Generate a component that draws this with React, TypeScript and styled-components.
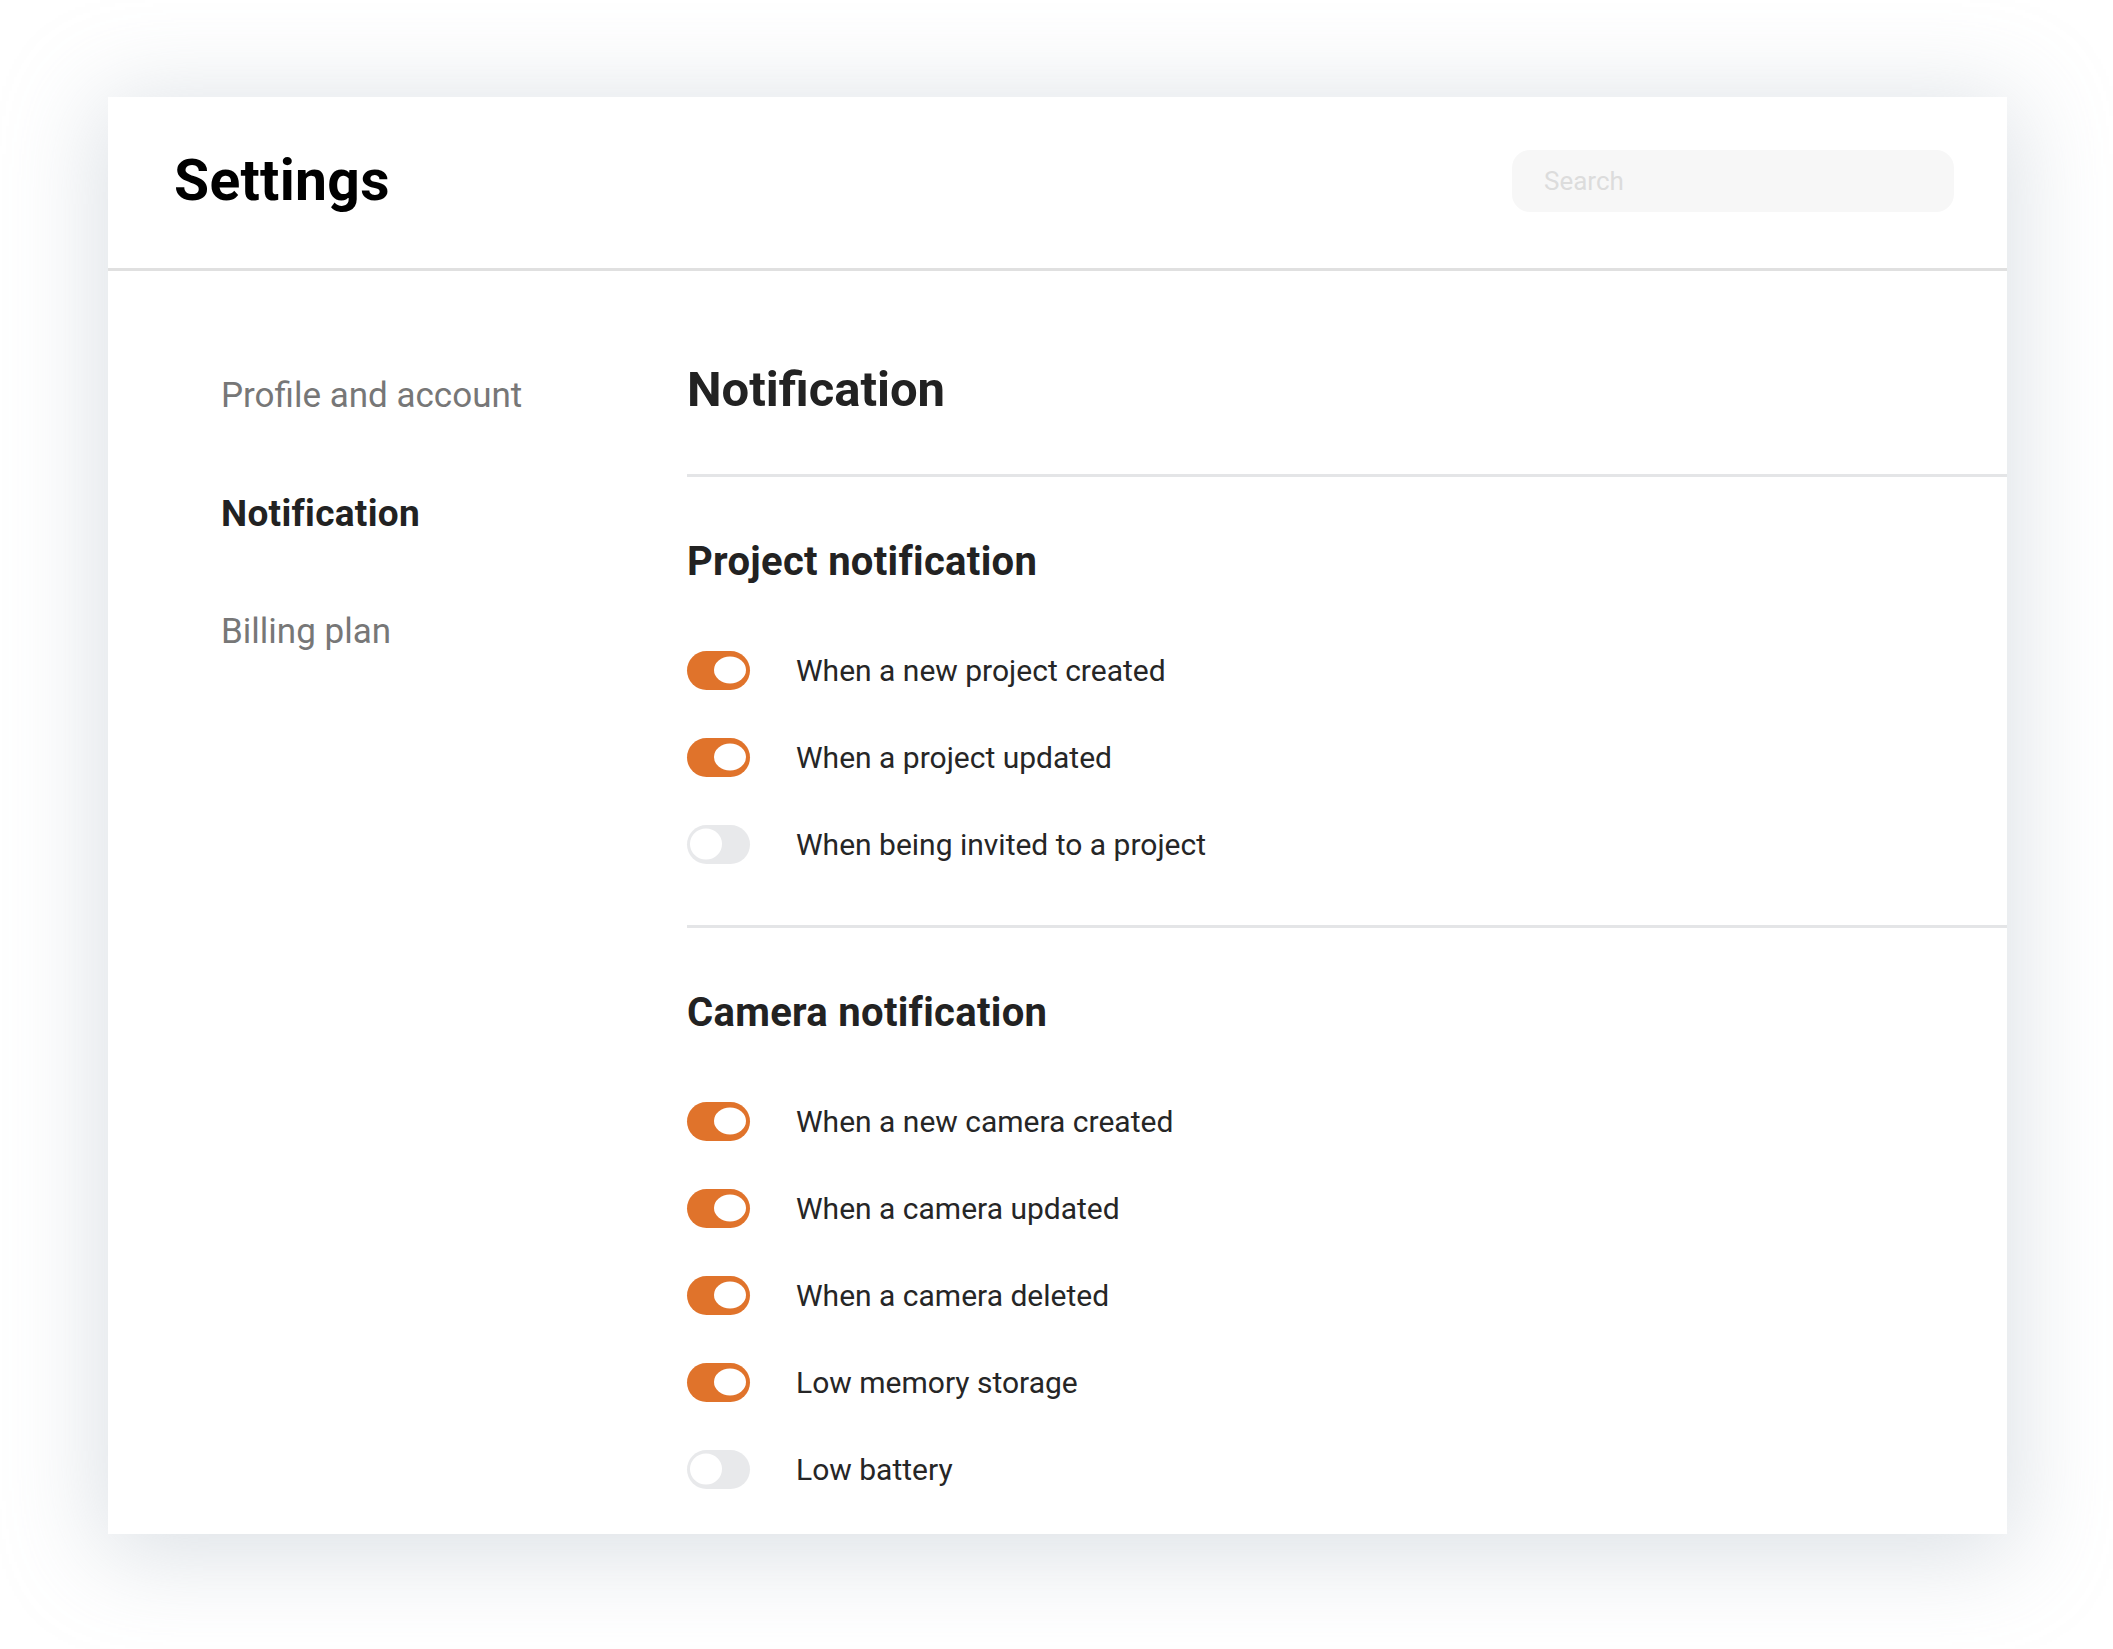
import React from "react";
import styled, { createGlobalStyle } from "styled-components";

const Global = createGlobalStyle`
  html, body { margin: 0; padding: 0; background: #ffffff; }
  body { font-family: Roboto, "Liberation Sans", Arial, sans-serif; -webkit-font-smoothing: antialiased; }
  * { box-sizing: border-box; }
`;

const Page = styled.div`
  width: 2113px;
  height: 1649px;
  padding: 97px 0 0 108px;
  overflow: hidden;
`;

const Card = styled.div`
  width: 1899px;
  background: #ffffff;
  box-shadow: 0 12px 90px 8px rgba(170, 180, 192, 0.42);
  display: flex;
  flex-direction: column;
`;

const Header = styled.header`
  height: 174px;
  border-bottom: 3px solid #e0e0e0;
  display: flex;
  align-items: center;
  justify-content: space-between;
  padding: 0 53px 4px 66px;
`;

const Title = styled.h1`
  margin: 0;
  font-size: 57px;
  font-weight: 700;
  color: #000000;
  letter-spacing: 0.3px;
`;

const Search = styled.input`
  width: 442px;
  height: 62px;
  border: none;
  outline: none;
  border-radius: 18px;
  background: #f7f7f7;
  padding: 0 0 0 32px;
  font-family: Roboto, "Liberation Sans", Arial, sans-serif;
  font-size: 26px;
  color: #333;
  &::placeholder { color: #dcdcdc; }
`;

const Body = styled.div`
  display: grid;
  grid-template-columns: 579px 1fr;
`;

const Sidebar = styled.nav`
  display: flex;
  flex-direction: column;
  gap: 76px;
  padding: 104px 0 0 113px;
`;

const NavItem = styled.div<{ $active?: boolean }>`
  font-size: ${(p) => (p.$active ? "37px" : "35px")};
  line-height: 42px;
  font-weight: ${(p) => (p.$active ? 700 : 400)};
  color: ${(p) => (p.$active ? "#222222" : "#777777")};
  letter-spacing: ${(p) => (p.$active ? "0.3px" : "0")};
`;

const Main = styled.main`
  display: flex;
  flex-direction: column;
  padding-top: 90px;
`;

const Heading = styled.h2`
  margin: 0 0 55px;
  font-size: 49px;
  line-height: 58px;
  font-weight: 700;
  color: #222222;
  letter-spacing: 0;
`;

const Section = styled.section`
  border-top: 3px solid #e4e5e7;
  padding: 62px 0 61px;
  &:last-child { padding-bottom: 45px; }
`;

const SubHeading = styled.h3`
  margin: 0 0 65px;
  font-size: 40px;
  line-height: 46px;
  font-weight: 700;
  color: #222222;
  letter-spacing: 0.3px;
`;

const Rows = styled.div`
  display: flex;
  flex-direction: column;
  gap: 47px;
`;

const Row = styled.label`
  display: flex;
  align-items: center;
  gap: 46px;
  height: 40px;
`;

const Track = styled.span<{ $on: boolean }>`
  position: relative;
  flex: none;
  width: 63px;
  height: 39px;
  border-radius: 20px;
  background: ${(p) => (p.$on ? "#e0732b" : "#e8e9eb")};
`;

const Knob = styled.span<{ $on: boolean }>`
  position: absolute;
  top: 50%;
  transform: translateY(-50%);
  ${(p) => (p.$on ? "right: 4px;" : "left: 3px;")}
  width: 32px;
  height: ${(p) => (p.$on ? "27px" : "31px")};
  border-radius: 50%;
  background: #ffffff;
`;

const Label = styled.span`
  font-size: 30px;
  color: #262626;
  letter-spacing: 0;
`;

function Toggle({ on }: { on: boolean }) {
  return (
    <Track $on={on}>
      <Knob $on={on} />
    </Track>
  );
}

const project = [
  { label: "When a new project created", on: true },
  { label: "When a project updated", on: true },
  { label: "When being invited to a project", on: false },
];

const camera = [
  { label: "When a new camera created", on: true },
  { label: "When a camera updated", on: true },
  { label: "When a camera deleted", on: true },
  { label: "Low memory storage", on: true },
  { label: "Low battery", on: false },
];

export default function App() {
  return (
    <>
      <Global />
      <Page>
        <Card>
          <Header>
            <Title>Settings</Title>
            <Search placeholder="Search" />
          </Header>
          <Body>
            <Sidebar>
              <NavItem>Profile and account</NavItem>
              <NavItem $active>Notification</NavItem>
              <NavItem>Billing plan</NavItem>
            </Sidebar>
            <Main>
              <Heading>Notification</Heading>
              <Section>
                <SubHeading>Project notification</SubHeading>
                <Rows>
                  {project.map((r) => (
                    <Row key={r.label}>
                      <Toggle on={r.on} />
                      <Label>{r.label}</Label>
                    </Row>
                  ))}
                </Rows>
              </Section>
              <Section>
                <SubHeading>Camera notification</SubHeading>
                <Rows>
                  {camera.map((r) => (
                    <Row key={r.label}>
                      <Toggle on={r.on} />
                      <Label>{r.label}</Label>
                    </Row>
                  ))}
                </Rows>
              </Section>
            </Main>
          </Body>
        </Card>
      </Page>
    </>
  );
}
